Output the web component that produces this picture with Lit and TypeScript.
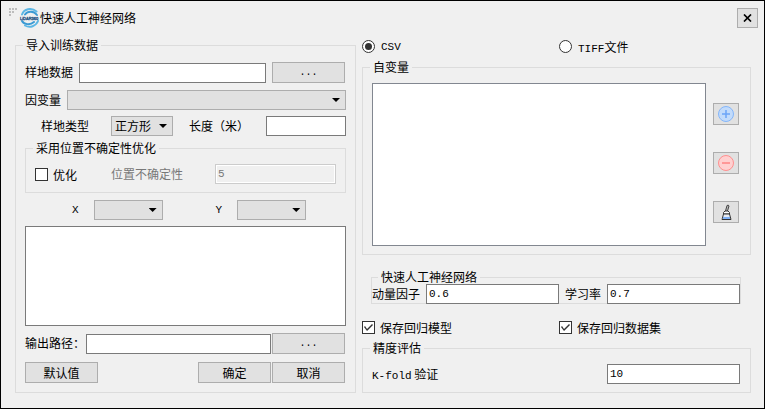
import { LitElement, html, css, svg } from "lit";
import { customElement, state } from "lit/decorators.js";

@customElement("app-root")
export class AppRoot extends LitElement {
  @state() private source: "csv" | "tiff" = "csv";
  @state() private optimise = false;

  static styles = css`
    :host {
      display: block;
      font: 12px/17px "Noto Sans CJK SC", sans-serif;
      color: #000;
    }
    * { box-sizing: border-box; }
    svg { display: block; }
    .window {
      min-height: 100vh;
      background: #f0f0f0;
      border: 1px solid #000;
      padding: 7px 13px 14px 14px;
    }
    .titlebar { display: flex; align-items: center; height: 20px; margin: 0 -7px 9px -6px; }
    .grip { align-self: flex-start; flex: none; margin-right: 1px; }
    .logo { flex: none; }
    .title { flex: 1; margin: 0; padding-bottom: 2px; font-size: 12px; font-weight: 400; white-space: nowrap; }
    .close { width: 21px; height: 20px; display: grid; place-items: center; }
    .columns { display: grid; grid-template-columns: 341fr 389fr; align-items: start; gap: 6px; }
    .column { display: flex; flex-direction: column; min-width: 0; }

    fieldset {
      margin: 0;
      min-width: 0;
      border: 1px solid #dcdcdc;
      padding: 7px 9px 8px;
    }
    legend { margin-left: -2px; padding: 0 3px; white-space: nowrap; height: 17px; line-height: 15px; }
    .main { padding-top: 8px; padding-bottom: 9px; }

    label { white-space: nowrap; padding-bottom: 2px; }
    .row { display: flex; align-items: center; gap: 6px; }
    .inset { padding-right: 1px; }
    .tight { gap: 1px; }
    .grow { flex: 1; min-width: 0; }
    .s4 { margin-top: 4px; }
    .s6 { margin-top: 6px; }
    .s7 { margin-top: 7px; }
    .s8 { margin-top: 8px; }

    input, button, select, textarea { font: inherit; color: inherit; margin: 0; border-radius: 0; outline-offset: -3px; }
    .box {
      display: block;
      height: 20px;
      min-width: 0;
      padding: 0 2px;
      border: 1px solid #7a7a7a;
      background: #fff;
      font-family: "Liberation Mono", "Noto Sans CJK SC", monospace;
      font-size: 11px;
    }
    .box:disabled { border-color: #ccc; background: #f0f0f0; color: #787878; box-shadow: inset 0 0 0 1px #fff; }
    .area { display: block; width: 100%; resize: none; border: 1px solid #7a7a7a; background: #fff; padding: 2px; }
    .notes { height: 100px; }
    button { height: 21px; padding: 0; border: 1px solid #adadad; background: #e1e1e1; }
    .push { width: 73px; }
    .browse { font-family: "Liberation Mono", monospace; font-size: 10px; }
    .mono { font-family: "Liberation Mono", monospace; font-size: 11px; line-height: 12px; }

    .combo { position: relative; display: block; height: 20px; }
    .combo select {
      appearance: none;
      display: block;
      width: 100%;
      height: 20px;
      padding: 0 16px 2px 3px;
      border: 1px solid #adadad;
      background: #e1e1e1;
    }
    .combo::after {
      content: "";
      position: absolute;
      right: 6px;
      top: 8px;
      width: 8px;
      height: 4px;
      background: #000;
      clip-path: polygon(0 0, 100% 0, 50% 100%);
      pointer-events: none;
    }
    .wide { width: 69px; }
    .shape { width: 62px; margin: 0 10px 0 16px; }
    .indent { padding-left: 16px; }
    .length { margin-left: 11px; }
    .axes { padding-left: 47px; gap: 15px; }
    .axes label { padding: 0; }
    .axes .second { margin-left: 38px; }

    .check { display: flex; align-items: center; gap: 5px; padding: 0; }
    .radio { gap: 6px; }
    input[type="checkbox"], input[type="radio"] {
      appearance: none;
      flex: none;
      width: 13px;
      height: 13px;
      border: 1px solid #333;
      background: #fff;
      display: grid;
      place-items: center;
    }
    input[type="radio"] { border-radius: 50%; }
    input[type="radio"]:checked::after { content: ""; width: 7px; height: 7px; border-radius: 50%; background: #333; }
    input[type="checkbox"]:checked::after {
      content: "";
      width: 11px;
      height: 11px;
      background: #333;
      clip-path: polygon(1px 5px, 2px 4px, 4px 7px, 9px 2px, 10px 3px, 4px 9px);
    }
    .faded { color: #787878; margin-left: 28px; }
    .uncertainty { margin-left: 26px; }

    .choices { display: grid; grid-template-columns: 197fr 192fr; height: 19px; align-items: center; }
    .variables { margin-top: 3px; padding-right: 11px; }
    .variables .row { align-items: stretch; gap: 7px; }
    .list { height: 163px; border-color: #828790; }
    .tools { display: flex; flex-direction: column; gap: 27px; padding-top: 20px; }
    .tools button { width: 26px; height: 22px; display: grid; place-items: center; }
    .network { margin: 14px 10px 14px 9px; padding: 0; }
    .network legend { margin-left: 6px; }
    .network .row { margin: -2px 0 -1px; }
    .accuracy { margin-top: 3px; padding-right: 10px; }
    .accuracy .row { justify-content: space-between; }
    .accuracy .box { width: 133px; }
  `;

  private logo() {
    return svg`
      <svg class="logo" width="21" height="20" viewBox="0 0 21 20" aria-hidden="true">
        <g fill="none" stroke-linecap="round">
          <path d="M3 6.500C5 1 12 -1 17.500 3.500" stroke="#5cb6e4" stroke-width="2"/>
          <path d="M6 6.500C9 2.500 15 3 18 7" stroke="#3b9ad4" stroke-width="2"/>
          <path d="M3 13C5 16.500 11 17.500 15 14" stroke="#3b9ad4" stroke-width="2"/>
          <path d="M6 17.500C11 20.500 17 18 19 13" stroke="#5cb6e4" stroke-width="2"/>
        </g>
        <text x="1" y="12" font-family="Liberation Sans, sans-serif" font-size="4" fill="#164a7c" stroke="#164a7c" stroke-width=".3">LiDAR360</text>
      </svg>`;
  }

  render() {
    return html`
      <div class="window">
        <header class="titlebar">
          <svg class="grip" width="9" height="8" viewBox="0 0 9 8" fill="#bdbdbd" shape-rendering="crispEdges" aria-hidden="true">
            <path d="M0 0h2v2H0zM3 0h2v2H3zM6 0h2v2H6zM0 3h2v2H0zM3 3h2v2H3zM0 6h2v2H0z"/>
          </svg>
          ${this.logo()}
          <h1 class="title">快速人工神经网络</h1>
          <button class="close" aria-label="关闭">
            <svg width="9" height="8" viewBox="0 0 9 8"><path d="M1 .5l7 7M8 .5l-7 7" stroke="#000" stroke-width="1.700"/></svg>
          </button>
        </header>

        <main class="columns">
          <fieldset class="main">
            <legend>导入训练数据</legend>
            <div class="row inset">
              <label for="plot">样地数据</label>
              <input class="box grow" id="plot" type="text" />
              <button class="push browse" aria-label="浏览样地数据">...</button>
            </div>
            <div class="row s7">
              <label for="dep">因变量</label>
              <span class="combo grow"><select id="dep"></select></span>
            </div>
            <div class="row indent s6">
              <label for="shape">样地类型</label>
              <span class="combo shape"><select id="shape"><option>正方形</option></select></span>
              <label for="len">长度（米）</label>
              <input class="box grow length" id="len" type="text" />
            </div>
            <fieldset class="inner s4">
              <legend>采用位置不确定性优化</legend>
              <div class="row">
                <label class="check">
                  <input type="checkbox" .checked=${this.optimise}
                    @change=${(e: Event) => (this.optimise = (e.target as HTMLInputElement).checked)} /><span>优化</span>
                </label>
                <label class="faded" for="unc">位置不确定性</label>
                <input class="box grow uncertainty" id="unc" type="text" value="5" ?disabled=${!this.optimise} />
              </div>
            </fieldset>
            <div class="row axes s7">
              <label class="mono" for="x">X</label>
              <span class="combo wide"><select id="x"></select></span>
              <label class="mono second" for="y">Y</label>
              <span class="combo wide"><select id="y"></select></span>
            </div>
            <textarea class="area notes s6" aria-label="数据"></textarea>
            <div class="row tight inset s7">
              <label for="out">输出路径：</label>
              <input class="box grow" id="out" type="text" />
              <button class="push browse" aria-label="浏览输出路径">...</button>
            </div>
            <div class="row inset s8">
              <button class="push">默认值</button>
              <span class="grow"></span>
              <span class="row tight">
                <button class="push">确定</button>
                <button class="push">取消</button>
              </span>
            </div>
          </fieldset>

          <section class="column">
            <div class="choices">
              <label class="check radio"><input type="radio" name="src" .checked=${this.source === "csv"}
                @change=${() => (this.source = "csv")} /><span class="mono">CSV</span></label>
              <label class="check radio"><input type="radio" name="src" .checked=${this.source === "tiff"}
                @change=${() => (this.source = "tiff")} /><span><span class="mono">TIFF</span>文件</span></label>
            </div>

            <fieldset class="variables">
              <legend>自变量</legend>
              <div class="row">
                <textarea class="area list grow" aria-label="自变量"></textarea>
                <div class="tools">
                  <button aria-label="添加">
                    <svg width="16" height="16" viewBox="0 0 16 16"><circle cx="8" cy="8" r="7.500" fill="#c2dbfb" stroke="#84b6fa"/><path d="M8 4v8M4 8h8" stroke="#6ca5f8" stroke-width="1.500"/></svg>
                  </button>
                  <button aria-label="删除">
                    <svg width="16" height="16" viewBox="0 0 16 16"><circle cx="8" cy="8" r="7.500" fill="#ffd0d0" stroke="#ff8f8f"/><path d="M4 8h8" stroke="#ff8585" stroke-width="1.500"/></svg>
                  </button>
                  <button aria-label="清空">
                    <svg width="16" height="16" viewBox="0 0 16 16"><path d="M7.500 7L9 1.500Q10.500 .5 11 2L9.500 7" fill="#bbb" stroke="#444"/><path d="M5.500 10V8.500L7 7h3l1.500 1.500V10z" fill="#fff" stroke="#333"/><path d="M5.500 10L4 15.500h9L11.500 10z" fill="#e8ecf2" stroke="#333"/><path d="M5 13h7v2H4.700z" fill="#7fb0f5"/></svg>
                  </button>
                </div>
              </div>
            </fieldset>

            <fieldset class="network">
              <legend>快速人工神经网络</legend>
              <div class="row">
                <label for="mom">动量因子</label>
                <input class="box grow" id="mom" type="text" value="0.6" />
                <label for="rate">学习率</label>
                <input class="box grow" id="rate" type="text" value="0.7" />
              </div>
            </fieldset>

            <div class="choices">
              <label class="check"><input type="checkbox" checked /><span>保存回归模型</span></label>
              <label class="check"><input type="checkbox" checked /><span>保存回归数据集</span></label>
            </div>

            <fieldset class="accuracy">
              <legend>精度评估</legend>
              <div class="row">
                <label for="kf"><span class="mono">K-fold</span> 验证</label>
                <input class="box" id="kf" type="text" value="10" />
              </div>
            </fieldset>
          </section>
        </main>
      </div>
    `;
  }
}
